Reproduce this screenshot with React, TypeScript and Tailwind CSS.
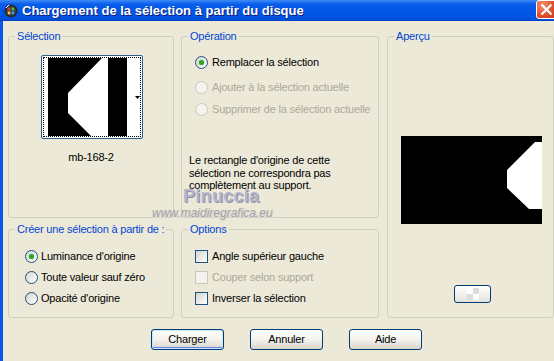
import React from "react";

// XP-style dialog: "Chargement de la sélection à partir du disque"

function Radio({ checked = false, disabled = false }: { checked?: boolean; disabled?: boolean }) {
  return (
    <span
      className={`w-[13px] h-[13px] rounded-full border flex items-center justify-center shrink-0 ${
        disabled ? "border-[#CAC8BB] bg-[#F4F3EE]" : "border-[#1C5180] bg-linear-to-br from-[#D6D5CE] to-white"
      }`}
    >
      {checked && <span className="w-[5px] h-[5px] rounded-full bg-[#27A527] shadow-[0_0_1px_#5FD35F]" />}
    </span>
  );
}

function Checkbox({ disabled = false }: { disabled?: boolean }) {
  return (
    <span
      className={`w-[13px] h-[13px] border shrink-0 ${
        disabled ? "border-[#CAC8BB] bg-[#F4F3EE]" : "border-[#1C5180] bg-linear-to-br from-[#D6D5CE] to-white"
      }`}
    />
  );
}

function Group({ label, className, children }: { label: string; className?: string; children?: React.ReactNode }) {
  return (
    <fieldset className={`border border-[#D0D0BF] rounded-[3px] p-0 m-0 min-w-0 ${className ?? ""}`}>
      <legend className="ml-[6px] px-[2px] h-[13px] leading-[13px] whitespace-nowrap text-[#0046D5]">{label}</legend>
      {children}
    </fieldset>
  );
}

function Button({ label, focused = false }: { label: string; focused?: boolean }) {
  return (
    <button
      className={`w-[73px] h-[21px] rounded-[3px] border border-[#003C74] bg-linear-to-b from-white via-[#F3F2EC] to-[#D9D5CA] text-[11px] leading-none ${
        focused ? "shadow-[inset_0_0_0_1px_#CEE7FF,inset_0_-1px_0_1px_#6982EE]" : ""
      }`}
    >
      {label}
    </button>
  );
}

export default function App() {
  return (
    <div className="w-[554px] h-[361px] overflow-hidden bg-[#ECE9D8] font-['Liberation_Sans',Arial,sans-serif] text-[11px] tracking-[-0.2px] text-black flex flex-col">
      {/* Title bar */}
      <div className="h-[21px] shrink-0 flex items-center bg-[linear-gradient(to_bottom,#3D8BF7_0%,#0A5DEB_20%,#0055E5_60%,#0052DF_88%,#0042C4_100%)]">
        <svg width="14" height="14" viewBox="0 0 14 14" className="ml-[4px]">
          <circle cx="7" cy="7" r="6.5" fill="#2A2A2A" />
          <circle cx="7" cy="7" r="4.5" fill="#4A4A4A" />
          <circle cx="5" cy="5" r="1.4" fill="#E33" />
          <circle cx="9" cy="5" r="1.4" fill="#3C3" />
          <circle cx="9" cy="9" r="1.4" fill="#39F" />
          <circle cx="5" cy="9" r="1.4" fill="#FC3" />
          <path d="M2 4 L5 1" stroke="#fff" strokeWidth="1" />
        </svg>
        <span className="ml-[4px] text-white font-bold text-[13px] tracking-[0px] [text-shadow:1px_1px_0_#0A1E7A]">
          Chargement de la sélection à partir du disque
        </span>
        <div className="ml-auto mr-[-3px] self-start w-[21px] h-[19px] rounded-[3px] border border-white bg-[radial-gradient(circle_at_30%_25%,#F39272,#E0492A_60%,#C53A18)] flex items-center justify-center">
          <svg width="13" height="13" viewBox="0 0 13 13">
            <path d="M1.5 1.5 L11.5 11.5 M11.5 1.5 L1.5 11.5" stroke="#fff" strokeWidth="2.2" />
          </svg>
        </div>
      </div>

      {/* Body */}
      <div className="relative flex-1 border-l-[3px] border-[#0A57E8] pl-[5px] pt-[9px] flex flex-col">
        <div className="flex">
          {/* Left column */}
          <div className="w-[166px] flex flex-col">
            <Group label="Sélection" className="h-[188px]">
              <div className="mt-[12px] ml-[32px] w-[102px] h-[84px] rounded-[2px] border border-[#2F5C8F] bg-white p-[1px]">
                <div className="w-full h-full border border-dotted border-black flex items-center pl-[4px]">
                  <svg width="79" height="78" viewBox="0 0 79 78">
                    <rect width="79" height="78" fill="#000" />
                    <polygon points="54,0 60,0 60,78 43,78 20,55 20,35" fill="#fff" />
                  </svg>
                  <svg width="5" height="3" viewBox="0 0 5 3" className="ml-[8px]">
                    <polygon points="0,0 5,0 2.5,3" fill="#000" />
                  </svg>
                </div>
              </div>
              <div className="mt-[12px] text-center leading-[13px]">mb-168-2</div>
            </Group>
            <Group label="Créer une sélection à partir de :" className="h-[95px] mt-[5px]">
              <div className="pl-[16px] pt-[14px] flex flex-col gap-[8px]">
                <div className="flex items-center gap-[3px] h-[13px]">
                  <Radio checked />
                  <span>Luminance d'origine</span>
                </div>
                <div className="flex items-center gap-[3px] h-[13px]">
                  <Radio />
                  <span>Toute valeur sauf zéro</span>
                </div>
                <div className="flex items-center gap-[3px] h-[13px]">
                  <Radio />
                  <span>Opacité d'origine</span>
                </div>
              </div>
            </Group>
          </div>

          {/* Middle column */}
          <div className="w-[198px] ml-[7px] flex flex-col">
            <Group label="Opération" className="h-[188px]">
              <div className="pl-[13px] flex flex-col">
                <div className="mt-[13px] flex items-center gap-[4px] h-[13px]">
                  <Radio checked />
                  <span>Remplacer la sélection</span>
                </div>
                <div className="mt-[12px] flex items-center gap-[4px] h-[13px] text-[#ACA899]">
                  <Radio disabled />
                  <span>Ajouter à la sélection actuelle</span>
                </div>
                <div className="mt-[9px] flex items-center gap-[4px] h-[13px] text-[#ACA899]">
                  <Radio disabled />
                  <span>Supprimer de la sélection actuelle</span>
                </div>
              </div>
              <p className="mt-[38px] pl-[7px] pr-[8px] leading-[12.5px]">
                Le rectangle d'origine de cette sélection ne correspondra pas complètement au support.
              </p>
            </Group>
            <Group label="Options" className="h-[95px] mt-[5px]">
              <div className="pl-[13px] pt-[14px] flex flex-col gap-[8px]">
                <div className="flex items-center gap-[4px] h-[13px]">
                  <Checkbox />
                  <span>Angle supérieur gauche</span>
                </div>
                <div className="flex items-center gap-[4px] h-[13px] text-[#ACA899]">
                  <Checkbox disabled />
                  <span>Couper selon support</span>
                </div>
                <div className="flex items-center gap-[4px] h-[13px]">
                  <Checkbox />
                  <span>Inverser la sélection</span>
                </div>
              </div>
            </Group>
          </div>

          {/* Right column */}
          <div className="w-[167px] ml-[8px]">
            <Group label="Aperçu" className="h-[288px]">
              <svg width="141" height="88" viewBox="0 0 141 88" className="mt-[93px] ml-[13px] block">
                <rect width="141" height="88" fill="#000" />
                <polygon points="134,6 141,6 141,73 128,73 106,52 106,34" fill="#fff" />
              </svg>
              <div className="mt-[61px] ml-[66px] w-[37px] h-[18px] rounded-[3px] border border-[#003C74] bg-linear-to-b from-white to-[#E3E1D8] flex items-center justify-center">
                <div className="grid grid-cols-2 w-[12px] h-[12px]">
                  <span className="bg-white" />
                  <span className="bg-[#DCDCDC]" />
                  <span className="bg-[#DCDCDC]" />
                  <span className="bg-white" />
                </div>
              </div>
            </Group>
          </div>
        </div>

        {/* Buttons */}
        <div className="flex mt-[11px] pl-[143px] gap-[26px]">
          <Button label="Charger" focused />
          <Button label="Annuler" />
          <Button label="Aide" />
        </div>

        {/* Watermark over the dialog */}
        <div className="absolute left-[180px] top-[165px] text-[18px] leading-[20px] font-bold tracking-[0.3px] text-[#B4B4CC] [text-shadow:1px_1px_0_#8E8EA6]">
          Pinuccia
        </div>
        <div className="absolute left-[149px] top-[185px] text-[12px] leading-[14px] tracking-[0px] italic text-[#A2A2A2] [text-shadow:1px_1px_0_#D8D8D8]">
          www.maidiregrafica.eu
        </div>
      </div>
    </div>
  );
}
